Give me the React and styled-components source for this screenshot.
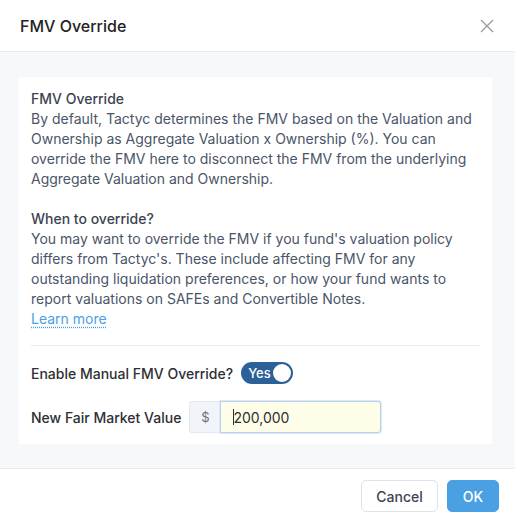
import React from "react";
import styled, { createGlobalStyle } from "styled-components";

const GlobalStyle = createGlobalStyle`
  html, body {
    margin: 0;
    padding: 0;
    background: #ffffff;
  }
  body {
    font-family: Inter, "Noto Sans", sans-serif;
    -webkit-font-smoothing: antialiased;
  }
`;

const App = () => {
  return (
    <>
      <GlobalStyle />
      <Modal>
        <Header>
          <h1>FMV Override</h1>
          <CloseButton aria-label="Close">
            <svg width="14" height="14" viewBox="0 0 14 14">
              <path d="M1 1L13 13M13 1L1 13" stroke="#9a9a9a" strokeWidth="1.3" />
            </svg>
          </CloseButton>
        </Header>
        <Body>
          <Card>
            <Info>
              <h3>FMV Override</h3>
              <p>
                By default, Tactyc determines the FMV based on the Valuation and
                Ownership as Aggregate Valuation x Ownership (%). You can
                override the FMV here to disconnect the FMV from the underlying
                Aggregate Valuation and Ownership.
              </p>
              <h3 className="spaced">When to override?</h3>
              <p>
                You may want to override the FMV if you fund's valuation policy
                differs from Tactyc's. These include affecting FMV for any
                outstanding liquidation preferences, or how your fund wants to
                report valuations on SAFEs and Convertible Notes.
              </p>
              <LearnLink href="#">Learn more</LearnLink>
            </Info>
            <Divider />
            <FieldRow>
              <label>Enable Manual FMV Override?</label>
              <Toggle $on>
                <span>Yes</span>
                <i />
              </Toggle>
            </FieldRow>
            <FieldRow>
              <label>New Fair Market Value</label>
              <InputGroup>
                <Addon>$</Addon>
                <InputBox>
                  <Caret />
                  <ValueInput defaultValue="200,000" />
                </InputBox>
              </InputGroup>
            </FieldRow>
          </Card>
        </Body>
        <Footer>
          <Button $width={77}>Cancel</Button>
          <Button $primary $width={52}>OK</Button>
        </Footer>
      </Modal>
    </>
  );
};

export default App;

const Modal = styled.div`
  width: 515px;
  height: 519px;
  display: flex;
  flex-direction: column;
  background: #fff;
  overflow: hidden;
`;

const Header = styled.div`
  height: 52px;
  box-sizing: border-box;
  border-bottom: 1px solid #e9ebee;
  display: flex;
  align-items: center;
  justify-content: space-between;
  padding: 0 20px;
  h1 {
    margin: 0;
    font-size: 16px;
    font-weight: 500;
    color: #222;
  }
`;

const CloseButton = styled.button`
  border: none;
  background: none;
  padding: 0;
  margin-right: 1px;
  display: flex;
  cursor: pointer;
`;

const Body = styled.div`
  background: #f7f8fa;
  padding: 25px 23px 24px 19px;
  flex: none;
`;

const Card = styled.div`
  background: #fff;
  padding: 12px 12px 11px;
`;

const Info = styled.div`
  font-size: 14px;
  line-height: 20px;
  color: #4a5568;
  h3 {
    margin: 0;
    font-size: 14px;
    font-weight: 500;
    color: #3d4451;
  }
  h3.spaced {
    margin-top: 20px;
  }
  p {
    margin: 0;
  }
`;

const LearnLink = styled.a`
  display: inline-block;
  color: #4a9fe3;
  text-decoration: underline dotted;
  text-underline-offset: 3px;
`;

const Divider = styled.hr`
  border: none;
  border-top: 1px solid #e9ebee;
  margin: 16px 0 16px;
`;

const FieldRow = styled.div`
  display: flex;
  align-items: center;
  gap: 8px;
  & + & {
    margin-top: 17px;
  }
  label {
    font-size: 14px;
    font-weight: 500;
    color: #2d2f33;
  }
`;

const Toggle = styled.div`
  width: 52px;
  height: 22px;
  border-radius: 11px;
  background: ${(p) => (p.$on ? "#2b6198" : "#cbd5e0")};
  display: flex;
  align-items: center;
  justify-content: space-between;
  padding: 0 2px 0 7px;
  box-sizing: border-box;
  span {
    color: #fff;
    font-size: 13px;
    font-weight: 500;
  }
  i {
    width: 18px;
    height: 18px;
    border-radius: 50%;
    background: #fff;
  }
`;

const InputGroup = styled.div`
  display: flex;
  height: 32px;
`;

const Addon = styled.div`
  width: 31px;
  box-sizing: border-box;
  background: #f1f4f9;
  border: 1px solid #e2e8f0;
  border-right: none;
  border-radius: 3px 0 0 3px;
  display: flex;
  align-items: center;
  justify-content: center;
  color: #6b7280;
  font-size: 13px;
`;

const InputBox = styled.div`
  position: relative;
  display: flex;
`;

const Caret = styled.span`
  position: absolute;
  left: 13px;
  top: 8px;
  width: 1px;
  height: 16px;
  background: #2d2f33;
`;

const ValueInput = styled.input`
  width: 161px;
  box-sizing: border-box;
  border: 1px solid #b9d0f0;
  box-shadow: 0 0 0 1px #dce8f8;
  background: #fdfde8;
  border-radius: 0 3px 3px 0;
  padding: 0 12px;
  font-family: Inter, "Noto Sans", sans-serif;
  font-size: 14px;
  color: #2d2f33;
  outline: none;
`;

const Footer = styled.div`
  flex: 1;
  border-top: 1px solid #e9ebee;
  display: flex;
  justify-content: flex-end;
  align-items: flex-start;
  gap: 9px;
  padding: 11px 16px 0;
`;

const Button = styled.button`
  box-sizing: border-box;
  height: 32px;
  width: ${(p) => p.$width}px;
  padding: 0;
  border-radius: 5px;
  font-family: Inter, "Noto Sans", sans-serif;
  font-size: 14px;
  font-weight: 500;
  cursor: pointer;
  border: 1px solid ${(p) => (p.$primary ? "#4ba0e4" : "#dfe3ea")};
  background: ${(p) => (p.$primary ? "#4ba0e4" : "#fff")};
  color: ${(p) => (p.$primary ? "#fff" : "#3d4451")};
`;
